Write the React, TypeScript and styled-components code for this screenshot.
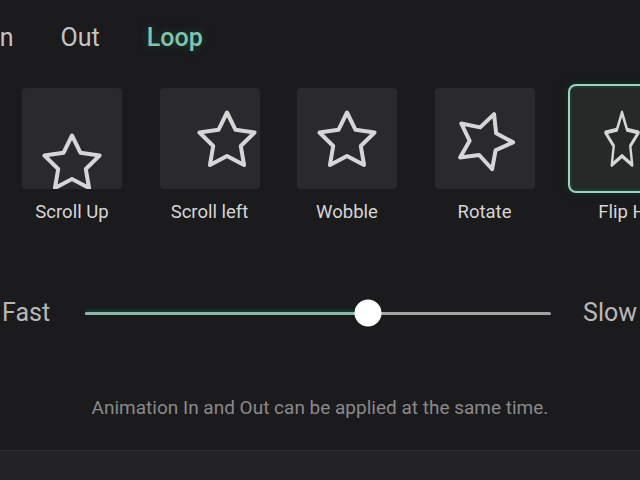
import React from "react";
import styled, { createGlobalStyle, css } from "styled-components";

const Global = createGlobalStyle`
  html, body { margin: 0; padding: 0; background: #1b1a1d; overflow: hidden; }
  body { font-family: Roboto, "Liberation Sans", sans-serif; }
`;

const Page = styled.div`
  width: 640px;
  height: 480px;
  display: flex;
  flex-direction: column;
  overflow: hidden;
  background: #1b1a1d;
`;

const Tabs = styled.div`
  display: flex;
  gap: 47px;
  margin-left: -7px;
  padding-top: 24px;
`;

const Tab = styled.div<{ $active?: boolean }>`
  font-size: 25px;
  line-height: 28px;
  color: #c4c4c4;
  white-space: nowrap;
  ${(p) =>
    p.$active &&
    css`
      color: #86c2ad;
      font-weight: 500;
      text-shadow: 0 0 8px rgba(20, 110, 80, 0.6);
    `}
`;

const TileRow = styled.div`
  display: flex;
  gap: 37.5px;
  padding-left: 22px;
  margin-top: 36px;
`;

const Item = styled.div`
  flex: 0 0 100px;
  display: flex;
  flex-direction: column;
  align-items: center;
`;

const Tile = styled.div<{ $selected?: boolean }>`
  width: 100px;
  height: 101px;
  border-radius: 4px;
  background: #2a292d;
  display: flex;
  align-items: center;
  justify-content: center;
  overflow: hidden;
  ${(p) =>
    p.$selected &&
    css`
      background: #252a28;
      outline: 2px solid #a3cfbf;
      outline-offset: 2px;
      box-shadow: 0 0 0 4px #1f3a31, 0 0 10px 4px rgba(10, 80, 55, 0.5);
    `}
`;

const Label = styled.div`
  margin-top: 12px;
  font-size: 18.5px;
  line-height: 22px;
  color: #d6d6d6;
  white-space: nowrap;
`;

const StarSvg = styled.svg<{ $fx: string }>`
  width: 64px;
  height: 64px;
  flex: 0 0 64px;
  transform: ${(p) => p.$fx};
`;

const Star = ({ fx }: { fx: string }) => (
  <StarSvg $fx={fx} viewBox="0 0 64 64">
    <path
      d="M32 5.5 L40.52 22.77 L59.58 25.54 L45.79 38.98 L49.05 57.96 L32 49 L14.95 57.96 L18.21 38.98 L4.42 25.54 L23.48 22.77 Z"
      fill="none"
      stroke="#d6d6d6"
      strokeWidth={4}
      strokeLinejoin="round"
    />
  </StarSvg>
);

const SliderRow = styled.div`
  display: flex;
  align-items: center;
  margin-top: 76px;
  padding-left: 2px;
  height: 28px;
`;

const SideLabel = styled.div`
  font-size: 25px;
  line-height: 28px;
  color: #b8b8b8;
  white-space: nowrap;
`;

const Track = styled.div`
  position: relative;
  flex: 0 0 466px;
  height: 3px;
  margin: 0 32px 0 35px;
  background: #a2a2a2;
  border-radius: 2px;
`;

const Fill = styled.div`
  height: 100%;
  background: #8fb6a9;
  border-radius: 2px;
  box-shadow: 0 -2px 3px rgba(10, 90, 60, 0.6);
`;

const Thumb = styled.div`
  position: absolute;
  top: 50%;
  width: 27px;
  height: 27px;
  border-radius: 50%;
  background: #ffffff;
  transform: translate(-50%, -50%);
`;

const Note = styled.div`
  margin-top: 70px;
  text-align: center;
  font-size: 19px;
  line-height: 22px;
  color: #8a898c;
`;

const BottomBar = styled.div`
  margin-top: auto;
  height: 29px;
  background: #232225;
  border-top: 1px solid #2f2e31;
`;

const items = [
  { label: "Scroll Up", fx: "translateY(23px)" },
  { label: "Scroll left", fx: "translateX(17px)" },
  { label: "Wobble", fx: "none" },
  { label: "Rotate", fx: "rotate(20deg)" },
  { label: "Flip H", fx: "scaleX(0.6)", selected: true },
];

export default function App() {
  const value = 0.608;
  return (
    <Page>
      <Global />
      <Tabs>
        <Tab>In</Tab>
        <Tab>Out</Tab>
        <Tab $active>Loop</Tab>
      </Tabs>
      <TileRow>
        {items.map((it) => (
          <Item key={it.label}>
            <Tile $selected={it.selected}>
              <Star fx={it.fx} />
            </Tile>
            <Label>{it.label}</Label>
          </Item>
        ))}
      </TileRow>
      <SliderRow>
        <SideLabel>Fast</SideLabel>
        <Track>
          <Fill style={{ width: `${value * 100}%` }} />
          <Thumb style={{ left: `${value * 100}%` }} />
        </Track>
        <SideLabel>Slow</SideLabel>
      </SliderRow>
      <Note>Animation In and Out can be applied at the same time.</Note>
      <BottomBar />
    </Page>
  );
}
